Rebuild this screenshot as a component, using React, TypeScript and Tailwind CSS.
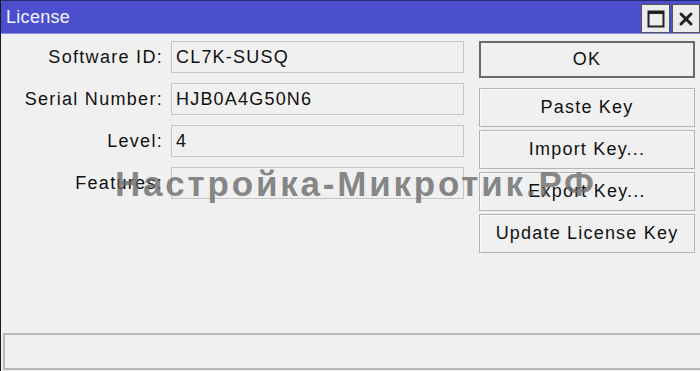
import { X } from 'lucide-react';

const FIELDS = [
  { label: 'Software ID:', value: 'CL7K-SUSQ' },
  { label: 'Serial Number:', value: 'HJB0A4G50N6' },
  { label: 'Level:', value: '4' },
  { label: 'Features:', value: '' },
];

const BUTTONS = ['Paste Key', 'Import Key...', 'Export Key...', 'Update License Key'];

export default function App() {
  return (
    <div
      className="relative w-[700px] h-[371px] bg-[#f0f0f0] border-l border-[#1a1a1a] flex flex-col overflow-hidden text-[#111]"
      style={{ fontFamily: '"Liberation Sans", Arial, sans-serif' }}
    >
      {/* title bar */}
      <div className="h-[34px] bg-[#4b4fcd] border-t border-[#2a2a6a] border-b border-b-[#8a8de6] flex items-center justify-between pl-[5px]">
        <span className="text-[18px] text-[#f4f4ff] tracking-[0.3px]">License</span>
        <div className="flex items-center gap-[2px] self-start mt-[3px]">
          <div className="w-[29px] h-[29px] bg-[#ececec] border border-[#555] flex items-center justify-center">
            <svg width="18" height="18" viewBox="0 0 18 18">
              <rect x="1.5" y="1.5" width="15" height="15" fill="none" stroke="#222" strokeWidth="2" />
              <rect x="1" y="1" width="16" height="3" fill="#222" />
            </svg>
          </div>
          <div className="w-[28px] h-[29px] bg-[#ececec] border border-[#555] flex items-center justify-center">
            <X size={20} strokeWidth={3.5} color="#222" />
          </div>
        </div>
      </div>

      {/* body */}
      <div className="flex items-start pt-[7px]">
        <div className="grid grid-cols-[162px_293px] gap-x-[8px] gap-y-[10px] items-center content-start">
          {FIELDS.map((f) => (
            <div key={f.label} className="contents">
              <div className="text-right text-[18px] tracking-[1.3px] whitespace-nowrap">{f.label}</div>
              <div className="h-[32px] border border-[#c6c6c6] flex items-center pl-[4px] text-[18px] tracking-[1.2px]">
                {f.value}
              </div>
            </div>
          ))}
        </div>
        <div className="ml-[15px] w-[216px] flex flex-col">
          <div className="h-[37px] border-2 border-[#6a6a6a] flex items-center justify-center text-[18px] tracking-[1.2px]">
            OK
          </div>
          <div className="flex flex-col gap-[3px] mt-[10px]">
            {BUTTONS.map((b) => (
              <div
                key={b}
                className="h-[39px] border border-[#b4b4b4] shadow-[inset_1px_1px_0_#fafafa] flex items-center justify-center text-[18px] tracking-[1.2px]"
              >
                {b}
              </div>
            ))}
          </div>
        </div>
      </div>

      <div className="flex-1" />

      {/* status bar */}
      <div className="ml-[2px] mb-[1px] h-[37px] border-t-2 border-l-2 border-b-2 border-[#b8b8b8]" />

      {/* watermark */}
      <div className="absolute left-[114px] top-[158px] text-[35px] font-bold text-[rgba(105,105,105,0.78)] tracking-[2.8px] pointer-events-none whitespace-nowrap">
        Настройка-Микротик.РФ
      </div>
    </div>
  );
}
